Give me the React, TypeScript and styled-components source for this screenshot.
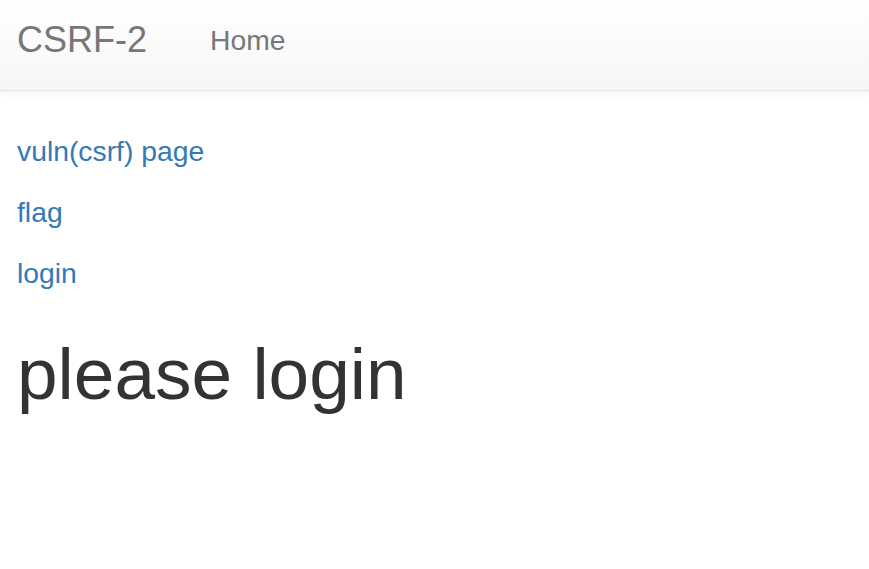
import styled, { createGlobalStyle } from "styled-components";

const GlobalStyle = createGlobalStyle`
  html, body {
    margin: 0;
    padding: 0;
    background: #fff;
    font-family: "Liberation Sans", Arial, sans-serif;
  }
`;

const Navbar = styled.nav`
  display: flex;
  align-items: flex-start;
  height: 91px;
  padding: 20px 16px 0 17px;
  box-sizing: border-box;
  background: linear-gradient(to bottom, #ffffff 0%, #f6f6f6 100%);
  border-bottom: 1px solid #e4e4e4;
  box-shadow: 0 2px 8px rgba(0, 0, 0, 0.06);
`;

const Brand = styled.a`
  font-size: 36px;
  line-height: 40px;
  color: #777;
  text-decoration: none;
  margin-right: 63px;
`;

const NavLink = styled.a`
  font-size: 28.3px;
  line-height: 40px;
  color: #777;
  text-decoration: none;
`;

const Content = styled.main`
  padding: 40px 16px 0 17px;
`;

const LinkRow = styled.p`
  margin: 0 0 20px;
  font-size: 28.3px;
  line-height: 41px;
`;

const PageLink = styled.a`
  color: #337ab7;
  text-decoration: none;
`;

const Heading = styled.h1`
  margin: 40px 0 0;
  font-size: 73px;
  font-weight: 400;
  line-height: 1.1;
  color: #333;
`;

const links = ["vuln(csrf) page", "flag", "login"];

export default function App() {
  return (
    <>
      <GlobalStyle />
      <Navbar>
        <Brand href="#">CSRF-2</Brand>
        <NavLink href="#">Home</NavLink>
      </Navbar>
      <Content>
        {links.map((label) => (
          <LinkRow key={label}>
            <PageLink href="#">{label}</PageLink>
          </LinkRow>
        ))}
        <Heading>please login</Heading>
      </Content>
    </>
  );
}
